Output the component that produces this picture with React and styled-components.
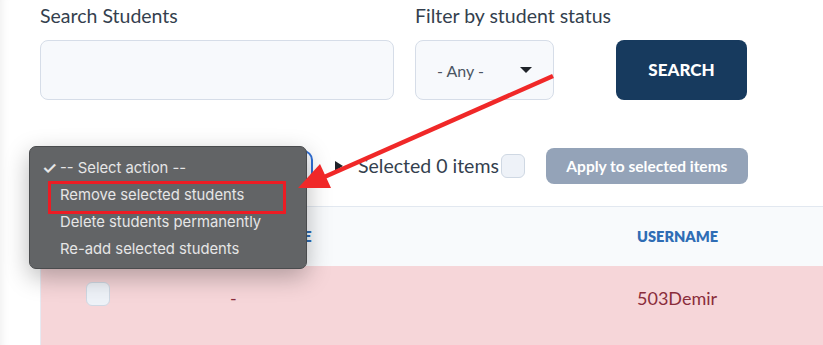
import React from "react";
import styled, { createGlobalStyle } from "styled-components";

const GlobalStyle = createGlobalStyle`
    html, body {
        margin: 0;
        padding: 0;
        background: #fff;
        font-family: Lato, "Noto Sans", sans-serif;
        overflow: hidden;
    }
`;

const Page = styled.div`
    position: relative;
    width: 823px;
    height: 345px;
    padding-left: 40px;
    box-sizing: border-box;
    box-shadow: inset 9px 0 10px -8px rgba(0, 0, 0, 0.08);
`;

const FilterRow = styled.div`
    display: flex;
    align-items: flex-end;
    padding-top: 4px;
`;

const Field = styled.div`
    display: flex;
    flex-direction: column;
    width: ${(props) => props.width}px;
    margin-right: ${(props) => props.gap || 0}px;
`;

const Label = styled.label`
    font-size: 19.5px;
    line-height: 24px;
    color: #343f4e;
    margin-bottom: 12px;
    white-space: nowrap;
`;

const TextBox = styled.div`
    height: 60px;
    box-sizing: border-box;
    background: #f7f9fc;
    border: 1px solid #d6dde8;
    border-radius: 8px;
`;

const SelectBox = styled(TextBox)`
    display: flex;
    align-items: center;
    justify-content: space-between;
    padding: 0 21px;
    font-size: 16px;
    color: #4b5563;
`;

const Caret = styled.span`
    width: 0;
    height: 0;
    border-left: 6px solid transparent;
    border-right: 6px solid transparent;
    border-top: 6px solid #1f2329;
`;

const SearchButton = styled.button`
    margin-left: 62px;
    width: 131px;
    height: 60px;
    border: none;
    border-radius: 8px;
    background: #173a5e;
    color: #fff;
    font-family: Lato, sans-serif;
    font-weight: 900;
    font-size: 17px;
    padding-bottom: 2px;
`;

const ActionRow = styled.div`
    position: relative;
    display: flex;
    align-items: center;
    height: 38px;
    margin-top: 47px;
`;

const ActionSelect = styled.div`
    width: 273px;
    height: 33px;
    box-sizing: border-box;
    border: 2px solid #2f6fd6;
    border-radius: 10px;
    background: #f7f9fc;
`;

const Triangle = styled.span`
    margin-left: 22px;
    width: 0;
    height: 0;
    border-top: 5px solid transparent;
    border-bottom: 5px solid transparent;
    border-left: 8px solid #1f2329;
`;

const SelectedText = styled.span`
    margin-left: 15px;
    font-size: 19.5px;
    color: #343f4e;
    padding-bottom: 2px;
`;

const CheckBox = styled.span`
    display: inline-block;
    width: 24px;
    height: 24px;
    box-sizing: border-box;
    background: #eef2f8;
    border: 1px solid #cfd8e3;
    border-radius: 6px;
    margin-left: ${(props) => props.gap || 0}px;
`;

const ApplyButton = styled.button`
    margin-left: 21px;
    width: 202px;
    height: 36px;
    border: none;
    border-radius: 8px;
    background: #94a3b8;
    color: #fff;
    font-family: Lato, sans-serif;
    font-weight: 700;
    font-size: 15.5px;
`;

const Menu = styled.ul`
    position: absolute;
    left: -11px;
    top: -1px;
    width: 278px;
    margin: 0;
    padding: 8px 0 5px;
    list-style: none;
    box-sizing: border-box;
    background: #626466;
    border: 1px solid #4a4c4e;
    border-radius: 7px;
    box-shadow: 0 8px 24px rgba(0, 0, 0, 0.28);
    z-index: 5;
`;

const MenuItem = styled.li`
    position: relative;
    height: 27px;
    line-height: 27px;
    padding-left: 30px;
    font-family: Inter, "Liberation Sans", sans-serif;
    font-size: 14.8px;
    color: #e6e6e6;

    &::before {
        content: ${(props) => (props.checked ? '"\\2713"' : '""')};
        position: absolute;
        left: 12px;
        font-size: 17px;
        font-weight: 600;
    }

    &::after {
        content: "";
        display: ${(props) => (props.marked ? "block" : "none")};
        position: absolute;
        left: 18px;
        right: 20px;
        top: -1px;
        bottom: -5px;
        border: 3px solid #ec1c24;
    }
`;

const Table = styled.div`
    margin-top: 21px;
    border-top: 1px solid #e2e8f0;
    border-left: 1px solid #e6eaf2;
`;

const Row = styled.div`
    display: grid;
    grid-template-columns: 189px 407px 1fr;
    align-items: ${(props) => (props.head ? "center" : "start")};
    height: ${(props) => (props.head ? 59 : 90)}px;
    background: ${(props) => (props.head ? "#f8fafc" : "#f6d6d9")};
`;

const HeadCell = styled.div`
    font-weight: 800;
    font-size: 14.6px;
    color: #2f6db5;
`;

const Cell = styled.div`
    padding-top: ${(props) => props.top || 21}px;
    padding-left: ${(props) => props.left || 0}px;
    font-size: 18px;
    color: #8a2d3b;
`;

const Overlay = styled.svg`
    position: absolute;
    left: 0;
    top: 0;
    pointer-events: none;
    z-index: 10;
`;

export default function App() {
    return (
        <Page>
            <GlobalStyle />
            <FilterRow>
                <Field width={354} gap={21}>
                    <Label>Search Students</Label>
                    <TextBox />
                </Field>
                <Field width={139}>
                    <Label>Filter by student status</Label>
                    <SelectBox>
                        <span>- Any -</span>
                        <Caret />
                    </SelectBox>
                </Field>
                <SearchButton>SEARCH</SearchButton>
            </FilterRow>

            <ActionRow>
                <ActionSelect />
                <Triangle />
                <SelectedText>Selected 0 items</SelectedText>
                <CheckBox gap={2} />
                <ApplyButton>Apply to selected items</ApplyButton>
                <Menu>
                    <MenuItem checked>-- Select action --</MenuItem>
                    <MenuItem marked>Remove selected students</MenuItem>
                    <MenuItem>Delete students permanently</MenuItem>
                    <MenuItem>Re-add selected students</MenuItem>
                </Menu>
            </ActionRow>

            <Table>
                <Row head>
                    <div />
                    <HeadCell>FULL NAME</HeadCell>
                    <HeadCell>USERNAME</HeadCell>
                </Row>
                <Row>
                    <Cell top={16} left={45}>
                        <CheckBox />
                    </Cell>
                    <Cell>-</Cell>
                    <Cell>503Demir</Cell>
                </Row>
            </Table>

            <Overlay width="823" height="345" viewBox="0 0 823 345">
                <line x1="553" y1="76" x2="322" y2="178" stroke="#f02828" strokeWidth="4.5" />
                <polygon points="298,188 331,188 320,164" fill="#f02828" />
            </Overlay>
        </Page>
    );
}
